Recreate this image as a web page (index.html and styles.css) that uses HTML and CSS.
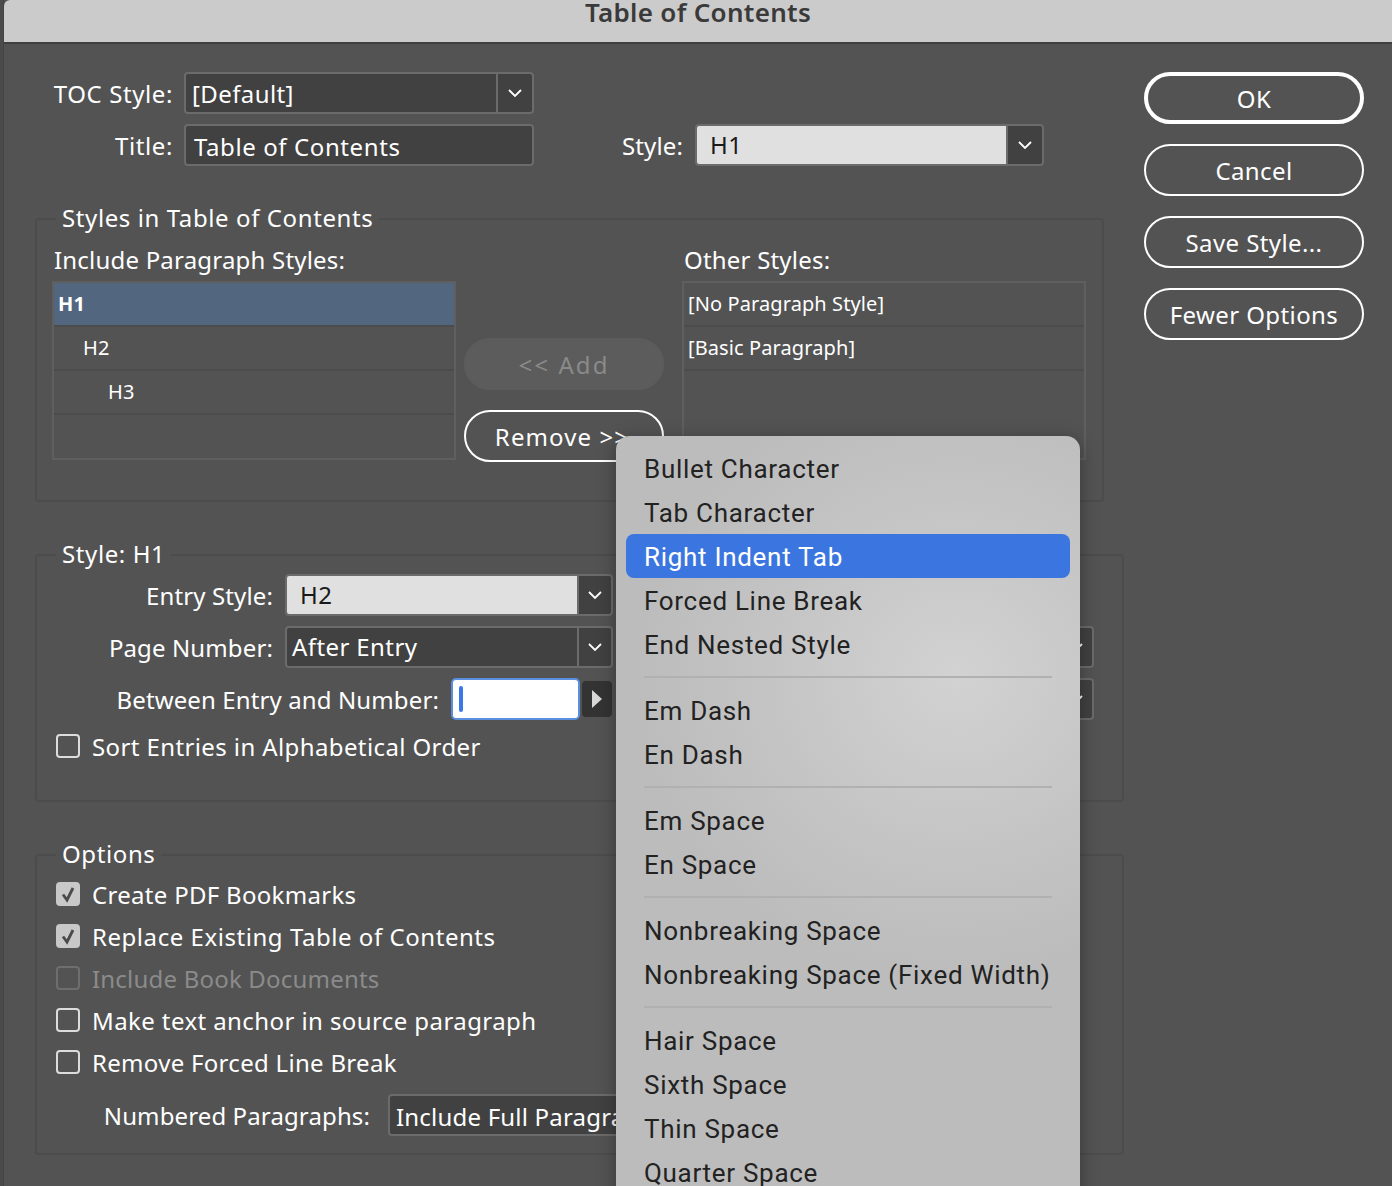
FILE: index.html
```html
<!DOCTYPE html>
<html lang="en">
<head>
<meta charset="utf-8">
<title>Table of Contents</title>
<link rel="stylesheet" href="styles.css">
</head>
<body>
<svg class="defs" width="0" height="0" aria-hidden="true"><defs>
<symbol id="chev" viewBox="0 0 16 10"><path d="M2 2l6 6 6-6" fill="none" stroke="currentColor" stroke-width="1.8"/></symbol>
<symbol id="tick" viewBox="0 0 22 24"><path d="M6 12.5l4 5.5 6-12" fill="none" stroke="#4a4a4a" stroke-width="2.8"/></symbol>
</defs></svg>
<div class="window">
  <header class="titlebar">Table of Contents</header>
  <div class="body">
    <main class="main">
      <div class="top-form">
        <div class="row">
          <label class="label w-top">TOC Style:</label>
          <div class="control w-350"><span class="field t-8">[Default]</span><span class="chev"><svg class="chev-i"><use href="#chev"/></svg></span></div>
        </div>
        <div class="row">
          <label class="label w-top">Title:</label>
          <div class="control w-350"><span class="field t-10">Table of Contents</span></div>
          <label class="label w-style">Style:</label>
          <div class="control w-349 light"><span class="field t-14">H1</span><span class="chev"><svg class="chev-i"><use href="#chev"/></svg></span></div>
        </div>
      </div>

      <fieldset class="group g1">
        <legend class="legend">Styles in Table of Contents</legend>
        <div class="lists">
          <div class="list-col">
            <div class="list-label">Include Paragraph Styles:</div>
            <ul class="list">
              <li class="sel bold">H1</li>
              <li class="i1">H2</li>
              <li class="i2">H3</li>
              <li></li>
            </ul>
          </div>
          <div class="list-actions">
            <button class="btn disabled add">&lt;&lt; Add</button>
            <button class="btn remove">Remove &gt;&gt;</button>
          </div>
          <div class="list-col">
            <div class="list-label">Other Styles:</div>
            <ul class="list">
              <li>[No Paragraph Style]</li>
              <li>[Basic Paragraph]</li>
              <li class="tall"></li>
            </ul>
          </div>
        </div>
      </fieldset>

      <fieldset class="group g2">
        <legend class="legend">Style: H1</legend>
        <div class="row">
          <label class="label w-entry">Entry Style:</label>
          <div class="control w-328 light"><span class="field t-13">H2</span><span class="chev"><svg class="chev-i"><use href="#chev"/></svg></span></div>
        </div>
        <div class="row">
          <label class="label w-entry">Page Number:</label>
          <div class="control w-328"><span class="field t-5">After Entry</span><span class="chev"><svg class="chev-i"><use href="#chev"/></svg></span></div>
          <div class="control w-400 push"><span class="field"></span><span class="chev"><svg class="chev-i"><use href="#chev"/></svg></span></div>
        </div>
        <div class="row">
          <label class="label w-between">Between Entry and Number:</label>
          <div class="focus-input"><span class="caret"></span></div>
          <span class="arrow-btn"><svg width="12" height="20" viewBox="0 0 12 20"><path d="M1 1l10 9-10 9z" fill="#d8d8d8"/></svg></span>
          <div class="control w-400 push"><span class="field"></span><span class="chev"><svg class="chev-i"><use href="#chev"/></svg></span></div>
        </div>
        <div class="check sort"><span class="box"></span>Sort Entries in Alphabetical Order</div>
      </fieldset>

      <fieldset class="group g3">
        <legend class="legend">Options</legend>
        <div class="check"><span class="box on"><svg class="tick"><use href="#tick"/></svg></span>Create PDF Bookmarks</div>
        <div class="check wide"><span class="box on"><svg class="tick"><use href="#tick"/></svg></span>Replace Existing Table of Contents</div>
        <div class="check off"><span class="box"></span>Include Book Documents</div>
        <div class="check mid"><span class="box"></span>Make text anchor in source paragraph</div>
        <div class="check"><span class="box"></span>Remove Forced Line Break</div>
        <div class="row numbered">
          <label class="label w-num">Numbered Paragraphs:</label>
          <div class="control w-600"><span class="field t-6 low">Include Full Paragraph</span><span class="chev"><svg class="chev-i"><use href="#chev"/></svg></span></div>
        </div>
      </fieldset>
    </main>
    <aside class="actions">
      <button class="btn primary">OK</button>
      <button class="btn">Cancel</button>
      <button class="btn">Save Style...</button>
      <button class="btn">Fewer Options</button>
    </aside>
  </div>
</div>
<nav class="menu">
  <div class="item">Bullet Character</div>
  <div class="item">Tab Character</div>
  <div class="item active">Right Indent Tab</div>
  <div class="item">Forced Line Break</div>
  <div class="item">End Nested Style</div>
  <div class="sep"></div>
  <div class="item">Em Dash</div>
  <div class="item">En Dash</div>
  <div class="sep"></div>
  <div class="item">Em Space</div>
  <div class="item">En Space</div>
  <div class="sep"></div>
  <div class="item">Nonbreaking Space</div>
  <div class="item">Nonbreaking Space (Fixed Width)</div>
  <div class="sep"></div>
  <div class="item">Hair Space</div>
  <div class="item">Sixth Space</div>
  <div class="item">Thin Space</div>
  <div class="item">Quarter Space</div>
</nav>
</body>
</html>
```
FILE: styles.css
```css
* { box-sizing: border-box; }
html, body { margin: 0; height: 1186px; overflow: hidden; }
body {
  position: relative;
  background: #4b4b4b;
  color: #fff;
  font-family: "Noto Sans", "DejaVu Sans", sans-serif;
  font-size: 24px;
  letter-spacing: .4px;
}
.defs { position: absolute; }
.window {
  margin-left: 3px;
  height: 1186px;
  background: #535353;
  border-left: 1px solid #444;
  overflow: hidden;
}
.titlebar {
  height: 44px;
  background: #cbcbcb;
  border-bottom: 2px solid #3f3f3f;
  border-top-left-radius: 6px;
  color: #3a3a3a;
  font-size: 26px;
  font-weight: 600;
  line-height: 25px;
  letter-spacing: .3px;
  text-align: center;
}
.body { display: flex; gap: 20px; padding: 28px 28px 0 31px; }
.main { width: 1089px; flex: none; }
.actions { display: flex; flex-direction: column; gap: 20px; width: 220px; flex: none; }

.btn {
  display: block;
  width: 100%;
  height: 52px;
  border: 2px solid #fff;
  border-radius: 26px;
  background: transparent;
  color: #fff;
  font: inherit;
  letter-spacing: .4px;
  padding: 0;
}
.btn.primary { border-width: 4px; }
.btn.disabled { background: #5c5c5c; border-color: #5c5c5c; color: #8a8a8a; }
.btn.add { letter-spacing: 2.1px; }
.btn.remove { letter-spacing: 1.1px; padding-right: 4px; }

.top-form { display: flex; flex-direction: column; gap: 10px; }
.row { display: flex; align-items: center; height: 42px; }
.label { flex: none; text-align: right; padding-right: 11px; letter-spacing: .12px; }
.w-top { width: 149px; letter-spacing: .6px; }
.w-style { width: 161px; padding-right: 12px; }
.w-entry { width: 233px; padding-right: 12px; }
.w-between { width: 399px; padding-right: 12px; }
.w-num { width: 336px; padding-right: 18px; }

.control {
  display: flex;
  flex: none;
  height: 42px;
  border: 2px solid #6b6b6b;
  border-radius: 4px;
  background: #414141;
  overflow: hidden;
}
.w-350 { width: 350px; }
.w-349 { width: 349px; }
.w-328 { width: 328px; }
.w-400 { width: 400px; }
.w-600 { width: 600px; }
.push { margin-left: auto; }
.field { flex: 1; min-width: 0; line-height: 38px; white-space: nowrap; overflow: hidden; }
.t-5 { padding-left: 5px; }
.t-6 { padding-left: 6px; }
.t-8 { padding-left: 6px; line-height: 40px; }
.t-10 { padding-left: 8px; line-height: 41px; letter-spacing: .6px; }
.t-13 { padding-left: 13px; }
.t-14 { padding-left: 13px; }
.low { line-height: 42px; letter-spacing: .2px; }
.chev {
  flex: none;
  width: 36px;
  border-left: 2px solid #6b6b6b;
  display: flex;
  align-items: center;
  justify-content: center;
  color: #fff;
}
.g2 .chev { width: 34px; }
.chev-i { width: 16px; height: 10px; }
.light .field { background: #e0e0e0; color: #1a1a1a; }

.group {
  margin: 39px 0 0;
  padding: 0 28px 0 15px;
  border: 2px solid #4c4c4c;
  border-radius: 4px;
}
.legend {
  margin-left: 4px;
  padding: 0 6px;
  line-height: 26px;
  height: 28px;
  letter-spacing: .6px;
}
.g1 { width: 1069px; padding: 0 16px 38px 15px; }
.g2 { height: 261px; padding-top: 5px; }
.g2 .row + .row { margin-top: 10px; }
.g3 { height: 314px; }

.lists { display: grid; grid-template-columns: 404px 210px 404px; column-gap: 8px; }
.list-label { height: 48px; line-height: 54px; padding-left: 2px; letter-spacing: .2px; }
.list {
  margin: 0;
  padding: 0;
  list-style: none;
  border: 2px solid #5f5f5f;
  height: 179px;
  font-size: 20px;
  letter-spacing: .1px;
}
.list li {
  height: 44px;
  line-height: 41px;
  padding-left: 4px;
  border-bottom: 2px solid #4c4c4c;
}
.list li:last-child { border-bottom: 0; }
.list li.tall { height: 87px; }
.list .sel { background: #52677f; }
.list .bold { font-weight: 700; }
.list .i1 { padding-left: 29px; }
.list .i2 { padding-left: 54px; }
.list-actions { display: flex; flex-direction: column; gap: 20px; padding: 105px 10px 0 0; }

.focus-input {
  width: 129px;
  height: 42px;
  flex: none;
  background: #fff;
  border: 2px solid #5a8fe0;
  border-radius: 5px;
  padding: 6px 6px;
}
.caret { display: block; width: 4px; height: 26px; background: #3a78e6; border-radius: 2px; }
.arrow-btn {
  width: 30px;
  height: 36px;
  margin-left: 2px;
  flex: none;
  background: #333;
  border-radius: 4px;
  display: flex;
  align-items: center;
  justify-content: center;
}

.check { display: flex; align-items: center; height: 42px; padding-left: 4px; gap: 12px; letter-spacing: .3px; }
.check.wide { letter-spacing: .55px; }
.check.mid { letter-spacing: .41px; }
.check.off { color: #8b8b8b; letter-spacing: .2px; }
.check.off .box { border-color: #6e6e6e; }
.sort { margin-top: 5px; letter-spacing: .39px; }
.box {
  width: 24px;
  height: 24px;
  flex: none;
  border: 2px solid #dcdcdc;
  border-radius: 4px;
  position: relative;
}
.box.on { background: #c8c8c8; border-color: #c8c8c8; }
.tick { position: absolute; left: -1px; top: -2px; width: 22px; height: 24px; }
.g3 .check:first-of-type { margin-top: 4px; }
.numbered { margin-top: 11px; }

.menu {
  position: absolute;
  left: 616px;
  top: 436px;
  width: 464px;
  height: 780px;
  padding: 10px 10px 0;
  border-radius: 14px;
  background: radial-gradient(ellipse 320px 300px at 340px 240px, #d2d2d2 0%, #c4c4c4 60%, #bcbcbc 100%);
  box-shadow: 0 4px 18px rgba(0, 0, 0, .35);
  color: #222;
  font-family: Roboto, "Noto Sans", sans-serif;
  font-size: 26px;
  letter-spacing: .7px;
}
.item {
  height: 44px;
  line-height: 46px;
  padding-left: 18px;
  border-radius: 8px;
  white-space: nowrap;
}
.item.active { background: #3b76e0; color: #fff; }
.sep { height: 2px; margin: 10px 18px; background: #b1b1b1; }
```
